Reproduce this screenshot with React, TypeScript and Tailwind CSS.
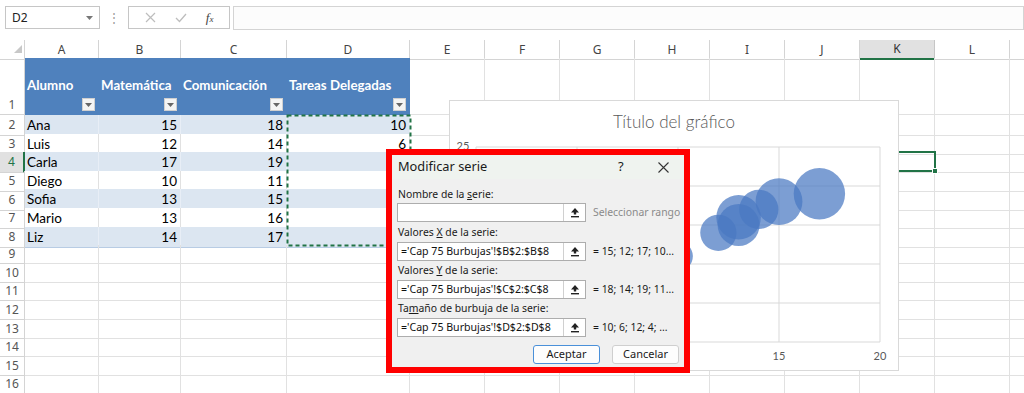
import React from "react";

const GRID =
  "grid grid-cols-[25px_74px_82px_106px_123px_75px_75px_75px_75px_75px_75px_75px_75px_75px]";

const colLetters = ["A", "B", "C", "D", "E", "F", "G", "H", "I", "J", "K", "L", ""];

const data: [string, number, number, number][] = [
  ["Ana", 15, 18, 10],
  ["Luis", 12, 14, 6],
  ["Carla", 17, 19, 12],
  ["Diego", 10, 11, 4],
  ["Sofia", 13, 15, 8],
  ["Mario", 13, 16, 9],
  ["Liz", 14, 17, 7],
];

const headers = ["Alumno", "Matemática", "Comunicación", "Tareas Delegadas"];

function FilterBtn() {
  return (
    <div className="absolute right-[4px] bottom-[4px] w-[13px] h-[13px] bg-[#f4f4f4] border border-[#d0d0d0] flex items-center justify-center">
      <svg width="7" height="4" viewBox="0 0 7 4">
        <path d="M0 0 L7 0 L3.5 4 Z" fill="#666" />
      </svg>
    </div>
  );
}

function UploadIcon() {
  return (
    <svg width="10" height="11" viewBox="0 0 10 11">
      <path d="M5 1 L1 5.5 L3.8 5.5 L3.8 7.5 L6.2 7.5 L6.2 5.5 L9 5.5 Z" fill="#222" />
      <rect x="1" y="9" width="8" height="1.4" fill="#222" />
    </svg>
  );
}

function RefInput({ value }: { value: string }) {
  return (
    <div className="flex shrink-0 h-[19px] w-[189px] bg-white border border-[#adadad]">
      <div className="flex-1 flex items-center pl-[3px] text-[10.6px] text-[#111] whitespace-nowrap overflow-hidden">
        {value}
      </div>
      <div className="w-[22px] border-l border-[#d0d0d0] flex items-center justify-center">
        <UploadIcon />
      </div>
    </div>
  );
}

function Chart() {
  const x = (v: number) => 26 + v * 20.2;
  const y = (v: number) => 241 - v * 7.8;
  const r = (s: number) => 25.7 * Math.sqrt(s / 12);
  const hLines = [0, 5, 10, 15, 20, 25];
  const vLines = [0, 5, 10, 15, 20];
  return (
    <div className="absolute left-[449px] top-[100px] w-[450px] h-[271px] bg-white border border-[#d9d9d9]">
      <div className="absolute left-0 right-0 top-[8px] text-center text-[17px] text-[#595959] font-['Lato',sans-serif] font-light">
        Título del gráfico
      </div>
      <svg className="absolute left-0 top-0" width="450" height="271" viewBox="0 0 450 271">
        {hLines.map((v) => (
          <line key={"h" + v} x1={26} x2={430} y1={y(v)} y2={y(v)} stroke="#d9d9d9" strokeWidth="1" />
        ))}
        {vLines.map((v) => (
          <line key={"v" + v} x1={x(v)} x2={x(v)} y1={y(25)} y2={y(0)} stroke="#d9d9d9" strokeWidth="1" />
        ))}
        {data.map((d) => (
          <circle key={d[0]} cx={x(d[1])} cy={y(d[2])} r={r(d[3])} fill="#4a78c2" fillOpacity="0.72" />
        ))}
        <text x="13" y="49" fontSize="11" fill="#595959" textAnchor="middle" fontFamily="Lato, sans-serif">25</text>
        {[15, 20].map((v) => (
          <text key={"xl" + v} x={x(v)} y="259" fontSize="11" fill="#595959" textAnchor="middle" fontFamily="Lato, sans-serif">
            {v}
          </text>
        ))}
      </svg>
    </div>
  );
}

function Dialog() {
  return (
    <div className="absolute left-[386px] top-[149px] w-[304px] h-[224px] border-[6px] border-[#ff0000] bg-[#f0f0f0] font-['Noto_Sans',sans-serif] text-[#1a1a1a]">
      <div className="h-[24px] flex items-center bg-[#eff3ef] pl-[6px] text-[12.8px] relative">
        <span>Modificar serie</span>
        <span className="absolute left-[226px] top-[2px] text-[13px]">?</span>
        <svg className="absolute left-[266px] top-[7px]" width="11" height="11" viewBox="0 0 11 11">
          <path d="M0.5 0.5 L10.5 10.5 M10.5 0.5 L0.5 10.5" stroke="#333" strokeWidth="1.1" />
        </svg>
      </div>
      <div className="pl-[5px] pr-[5px] text-[10.4px]">
        <div className="mt-[8px] h-[14px] leading-[14px] pl-[1px]">
          Nombre de la <span className="underline">s</span>erie:
        </div>
        <div className="mt-[2px] flex items-center">
          <RefInput value="" />
          <span className="ml-[7px] text-[#8a8a8a] whitespace-nowrap">Seleccionar rango</span>
        </div>
        <div className="mt-[3px] h-[14px] leading-[14px] pl-[1px]">
          Valores <span className="underline">X</span> de la serie:
        </div>
        <div className="mt-[3px] flex items-center">
          <RefInput value="='Cap 75 Burbujas'!$B$2:$B$8" />
          <span className="ml-[7px] whitespace-nowrap">= 15; 12; 17; 10...</span>
        </div>
        <div className="mt-[2px] h-[14px] leading-[14px] pl-[1px]">
          Valores <span className="underline">Y</span> de la serie:
        </div>
        <div className="mt-[3px] flex items-center">
          <RefInput value="='Cap 75 Burbujas'!$C$2:$C$8" />
          <span className="ml-[7px] whitespace-nowrap">= 18; 14; 19; 11...</span>
        </div>
        <div className="mt-[2px] h-[14px] leading-[14px] pl-[1px]">
          Ta<span className="underline">m</span>año de burbuja de la serie:
        </div>
        <div className="mt-[3px] flex items-center">
          <RefInput value="='Cap 75 Burbujas'!$D$2:$D$8" />
          <span className="ml-[7px] whitespace-nowrap">= 10; 6; 12; 4; ...</span>
        </div>
        <div className="mt-[8px] flex justify-end gap-[12px]">
          <div className="w-[67px] h-[19px] rounded-[3px] border border-[#4a90d9] bg-[#fdfdfd] flex items-center justify-center text-[11px]">
            Aceptar
          </div>
          <div className="w-[67px] h-[19px] rounded-[3px] border border-[#cfcfcf] bg-[#fdfdfd] flex items-center justify-center text-[11px]">
            Cancelar
          </div>
        </div>
      </div>
    </div>
  );
}

export default function App() {
  return (
    <div className="relative w-[1024px] h-[393px] overflow-hidden bg-white font-['Lato',sans-serif]">
      {/* formula bar */}
      <div className="h-[40px] flex items-start pt-[6px] pl-[5px] font-['Noto_Sans',sans-serif]">
        <div className="w-[95px] h-[23px] border border-[#c6c6c6] flex items-center justify-between pl-[6px] pr-[6px] text-[12px] text-[#222]">
          <span>D2</span>
          <svg width="7" height="4" viewBox="0 0 7 4">
            <path d="M0 0 L7 0 L3.5 4 Z" fill="#777" />
          </svg>
        </div>
        <div className="w-[28px] h-[23px] flex items-center justify-center text-[#9a9a9a] text-[12px]">⋮</div>
        <div className="w-[102px] h-[23px] border border-[#c6c6c6] flex items-center justify-around px-[6px]">
          <svg width="11" height="11" viewBox="0 0 11 11">
            <path d="M1 1 L10 10 M10 1 L1 10" stroke="#bdbdbd" strokeWidth="1.2" />
          </svg>
          <svg width="12" height="10" viewBox="0 0 12 10">
            <path d="M1 5 L4.5 8.5 L11 1" stroke="#bdbdbd" strokeWidth="1.3" fill="none" />
          </svg>
          <span className="font-['Liberation_Serif',serif] italic text-[13px] text-[#444]">
            f<span className="text-[9px]">x</span>
          </span>
        </div>
        <div className="ml-[3px] flex-1 h-[24px] border border-[#d4d4d4] bg-[#fcfcfc]" />
      </div>

      {/* column header */}
      <div className={GRID + " h-[18px] text-[12px] text-[#444] font-['Noto_Sans',sans-serif]"}>
        <div className="relative border-r border-b border-[#d4d4d4]">
          <svg className="absolute left-[14px] top-[5px]" width="8" height="8" viewBox="0 0 8 8">
            <path d="M8 0 L8 8 L0 8 Z" fill="#c8c8c8" />
          </svg>
        </div>
        {colLetters.map((c, i) => (
          <div
            key={"c" + i}
            className={
              c === "K"
                ? "flex items-center justify-center bg-[#e1e1e1] border-r border-[#c6c6c6] border-b-2 border-b-[#217346] text-[#333]"
                : "flex items-center justify-center border-r border-b border-[#d4d4d4]"
            }
          >
            {c}
          </div>
        ))}
      </div>

      {/* row 1 */}
      <div className={GRID + " h-[57px] text-[13.3px]"}>
        <div className="flex items-end justify-center pb-[0px] border-r border-b border-[#d4d4d4] text-[12px] text-[#555] font-['Noto_Sans',sans-serif]">
          1
        </div>
        {headers.map((h) => (
          <div key={h} className="relative bg-[#4f81bd] flex items-center pl-[2px] pb-[1px] text-white font-bold whitespace-nowrap">
            {h}
            <FilterBtn />
          </div>
        ))}
        {colLetters.slice(4).map((c, i) => (
          <div key={"e" + i} className="border-r border-b border-[#e1e1e1]" />
        ))}
      </div>

      {/* data rows 2-8 */}
      {data.map((d, i) => {
        const band = i % 2 === 0;
        const rowNum = i + 2;
        const cellBase = band
          ? "bg-[#dce6f1] border-b border-r border-b-[#b8cce4] border-r-[#e8eef6] flex items-center"
          : "bg-white border-b border-r border-b-[#b8cce4] border-r-[#e1e1e1] flex items-center";
        return (
          <div key={d[0]} className={GRID + " h-[18.6px] text-[13.5px] text-black"}>
            <div
              className={
                rowNum === 4
                  ? "flex items-center justify-center bg-[#e1e1e1] border-r-2 border-r-[#217346] border-b border-b-[#d4d4d4] text-[12px] text-[#217346] font-['Noto_Sans',sans-serif]"
                  : "flex items-center justify-center border-r border-b border-[#d4d4d4] text-[12px] text-[#555] font-['Noto_Sans',sans-serif]"
              }
            >
              {rowNum}
            </div>
            <div className={cellBase + " pl-[2px]"}>{d[0]}</div>
            <div className={cellBase + " justify-end pr-[3px]"}>{d[1]}</div>
            <div className={cellBase + " justify-end pr-[3px]"}>{d[2]}</div>
            <div className={cellBase + " justify-end pr-[3px]"}>{d[3]}</div>
            {colLetters.slice(4).map((c, j) => (
              <div key={"e" + j} className="border-r border-b border-[#e1e1e1]" />
            ))}
          </div>
        );
      })}

      {/* empty rows 9-16 */}
      {[9, 10, 11, 12, 13, 14, 15, 16].map((n) => (
        <div key={n} className={GRID + " h-[18.6px]"}>
          <div className="flex items-center justify-center border-r border-b border-[#d4d4d4] text-[12px] text-[#555] font-['Noto_Sans',sans-serif]">
            {n}
          </div>
          {colLetters.map((c, j) => (
            <div key={"e" + j} className="border-r border-b border-[#e1e1e1]" />
          ))}
        </div>
      ))}

      {/* marching ants around D2:D8 */}
      <svg className="absolute left-[286px] top-[114px]" width="126" height="133" viewBox="0 0 126 133">
        <rect x="1.5" y="1.5" width="123" height="130" fill="none" stroke="#217346" strokeWidth="2" strokeDasharray="4 3" />
      </svg>

      {/* active cell K4 */}
      <div className="absolute left-[859px] top-[151px] w-[77px] h-[21px] border-2 border-[#217346]">
        <div className="absolute right-[-4px] bottom-[-4px] w-[6px] h-[6px] bg-[#217346] border border-white" />
      </div>

      <Chart />
      <Dialog />
    </div>
  );
}
